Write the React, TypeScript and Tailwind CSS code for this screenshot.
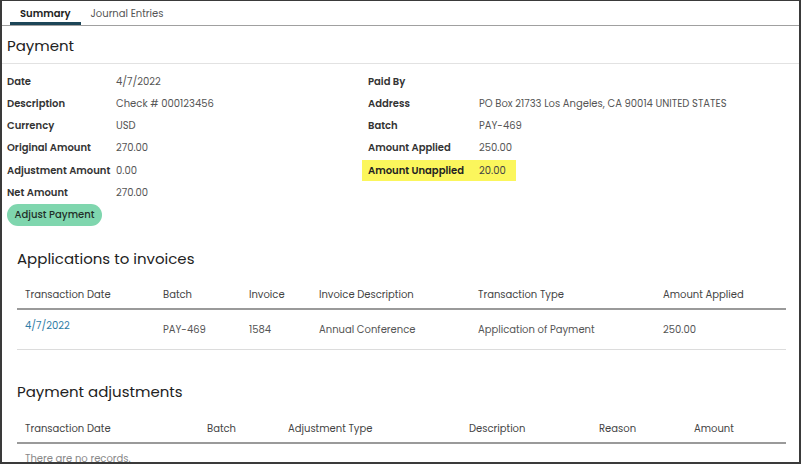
import React from "react";

const font = { fontFamily: '"Poppins","Open Sans",sans-serif' };

function Field({ label, value }: { label: string; value: string }) {
  return (
    <div className="flex h-[22.25px] items-center">
      <div className="w-[109px] shrink-0 text-[10px] font-semibold text-[#333]">{label}</div>
      <div className="text-[10px] text-[#555]">{value}</div>
    </div>
  );
}

export default function App() {
  const t1 = ["Transaction Date", "Batch", "Invoice", "Invoice Description", "Transaction Type", "Amount Applied"];
  const t2 = ["Transaction Date", "Batch", "Adjustment Type", "Description", "Reason", "Amount"];
  return (
    <div
      style={font}
      className="w-[801px] h-[464px] overflow-hidden bg-white border-t border-l-2 border-r-2 border-b-2 border-[#3a3a3a] flex flex-col"
    >
      {/* Tabs */}
      <div className="flex h-[25px] shrink-0 border-b border-[#a0a0a0] pl-[8px]">
        <div className="px-[10px] flex items-center text-[10px] font-semibold text-[#222] border-b-[3px] border-[#1c4557] pt-[3px]">
          Summary
        </div>
        <div className="px-[10px] flex items-center text-[10px] text-[#555] pt-[1px]">Journal Entries</div>
      </div>

      {/* Payment header */}
      <div className="h-[38px] shrink-0 border-b border-[#e2e2e2] pl-[5px] flex items-center pt-[4px] text-[15px] text-[#222]">
        Payment
      </div>

      {/* Fields */}
      <div className="flex pl-[5px] pt-[6px] shrink-0">
        <div className="w-[355px]">
          <Field label="Date" value="4/7/2022" />
          <Field label="Description" value="Check # 000123456" />
          <Field label="Currency" value="USD" />
          <Field label="Original Amount" value="270.00" />
          <Field label="Adjustment Amount" value="0.00" />
          <Field label="Net Amount" value="270.00" />
        </div>
        <div className="flex-1 pl-[6px]">
          <div className="flex h-[22.25px] items-center">
            <div className="w-[111px] shrink-0 text-[10px] font-semibold text-[#333]">Paid By</div>
          </div>
          <div className="flex h-[22.25px] items-center">
            <div className="w-[111px] shrink-0 text-[10px] font-semibold text-[#333]">Address</div>
            <div className="text-[10px] text-[#555]">PO Box 21733 Los Angeles, CA 90014 UNITED STATES</div>
          </div>
          <div className="flex h-[22.25px] items-center">
            <div className="w-[111px] shrink-0 text-[10px] font-semibold text-[#333]">Batch</div>
            <div className="text-[10px] text-[#555]">PAY-469</div>
          </div>
          <div className="flex h-[22.25px] items-center">
            <div className="w-[111px] shrink-0 text-[10px] font-semibold text-[#333]">Amount Applied</div>
            <div className="text-[10px] text-[#555]">250.00</div>
          </div>
          <div className="h-[22.25px] flex items-center">
            <div className="flex items-center h-[21px] bg-[#fbf65c] -ml-[6px] pl-[6px] w-[154px]">
              <div className="w-[111px] shrink-0 text-[10px] font-semibold text-[#222]">Amount Unapplied</div>
              <div className="text-[10px] text-[#444]">20.00</div>
            </div>
          </div>
        </div>
      </div>

      <div className="pl-[5px] shrink-0 flex">
        <button className="h-[22px] w-[95px] rounded-full bg-[#7fd6ae] text-[10px] font-medium text-[#1f2f28]">
          Adjust Payment
        </button>
      </div>

      {/* Applications to invoices */}
      <div className="pl-[15px] pr-[13px] shrink-0">
        <div className="h-[47px] flex items-end pb-[2px] text-[15px] text-[#222]">Applications to invoices</div>
        <div className="grid grid-cols-[138px_86px_70px_159px_185px_131px] h-[37px] items-end pb-[6px] border-b-2 border-[#9a9a9a] text-[10px] text-[#444]">
          {t1.map((h) => (
            <div key={h} className="pl-[8px]">{h}</div>
          ))}
        </div>
        <div className="grid grid-cols-[138px_86px_70px_159px_185px_131px] h-[40px] border-b border-[#dcdcdc] text-[10px] text-[#555]">
          <div className="pl-[8px] pt-[8px] text-[#2e7ca6]">4/7/2022</div>
          <div className="pl-[8px] flex items-center">PAY-469</div>
          <div className="pl-[8px] flex items-center">1584</div>
          <div className="pl-[8px] flex items-center">Annual Conference</div>
          <div className="pl-[8px] flex items-center">Application of Payment</div>
          <div className="pl-[8px] flex items-center">250.00</div>
        </div>

        <div className="h-[57px] flex items-end pb-[3px] text-[15px] text-[#222]">Payment adjustments</div>
        <div className="grid grid-cols-[182px_81px_181px_130px_95px_100px] h-[37px] items-end pb-[6px] border-b-2 border-[#9a9a9a] text-[10px] text-[#444]">
          {t2.map((h) => (
            <div key={h} className="pl-[8px]">{h}</div>
          ))}
        </div>
        <div className="pl-[8px] pt-[7px] text-[10px] text-[#888]">There are no records.</div>
      </div>
    </div>
  );
}
